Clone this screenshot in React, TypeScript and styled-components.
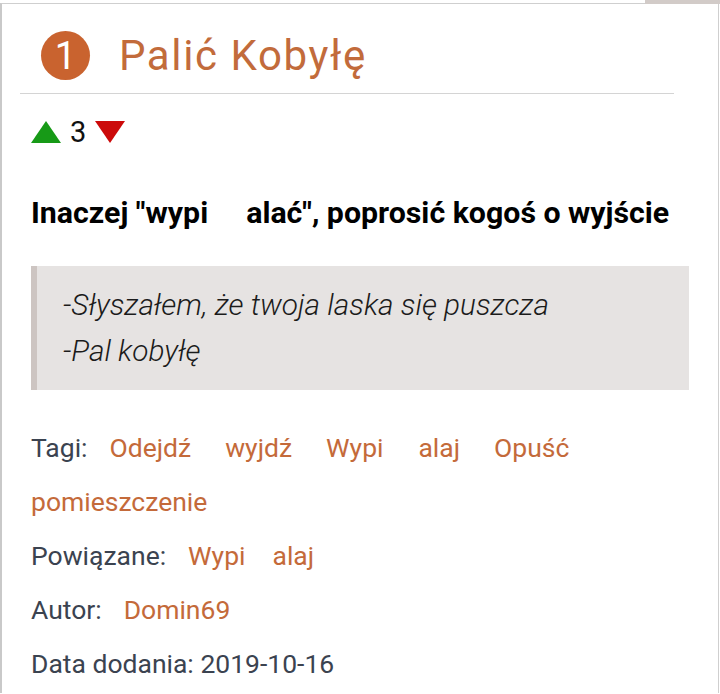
import styled, { createGlobalStyle } from 'styled-components';

type Entry = {
  number: number;
  title: string;
  votes: number;
  meaning: string[];
  example: string[];
  tags: string[][];
  related: string[];
  author: string;
  added: string;
};

const entry: Entry = {
  number: 1,
  title: 'Palić Kobyłę',
  votes: 3,
  meaning: ['Inaczej "wypi', 'alać", poprosić kogoś o wyjście'],
  example: ['-Słyszałem, że twoja laska się puszcza', '-Pal kobyłę'],
  tags: [['Odejdź'], ['wyjdź'], ['Wypi', 'alaj'], ['Opuść'], ['pomieszczenie']],
  related: ['Wypi', 'alaj'],
  author: 'Domin69',
  added: '2019-10-16',
};

const GlobalStyle = createGlobalStyle`
  html, body {
    margin: 0;
    padding: 0;
    background: #fff;
  }
  body {
    font-family: Roboto, "Noto Sans", sans-serif;
    color: #3b4350;
  }
`;

// tekst zakryty w oryginale - zostawiamy przerwę
function Hidden({ parts, width }: { parts: string[]; width: number }) {
  return (
    <>
      {parts[0]}
      {parts.length > 1 && <Gap $w={width} />}
      {parts[1]}
    </>
  );
}

export default function App() {
  return (
    <>
      <GlobalStyle />
      <TopStrip>
        <Tab />
      </TopStrip>
      <Card>
        <Header>
          <Num>{entry.number}</Num>
          <Title>{entry.title}</Title>
        </Header>
        <Body>
          <Votes>
            <Arrow $up />
            <Count>{entry.votes}</Count>
            <Arrow />
          </Votes>
          <Meaning>
            <Hidden parts={entry.meaning} width={38} />
          </Meaning>
          <Quote>
            {entry.example.map((l) => (
              <p key={l}>{l}</p>
            ))}
          </Quote>
          <Meta>
            <MetaRow>
              <Label>Tagi:</Label>
              {entry.tags.map((t, i) => (
                <Tag key={i}>
                  <Hidden parts={t} width={35} />
                </Tag>
              ))}
            </MetaRow>
            <MetaRow>
              <Label>Powiązane:</Label>
              <Tag>
                <Hidden parts={entry.related} width={27} />
              </Tag>
            </MetaRow>
            <MetaRow>
              <Label>Autor:</Label>
              <Tag>{entry.author}</Tag>
            </MetaRow>
            <MetaRow>
              <Label>Data dodania: {entry.added}</Label>
            </MetaRow>
          </Meta>
        </Body>
      </Card>
    </>
  );
}

const TopStrip = styled.div`
  display: flex;
  justify-content: flex-end;
  height: 3px;
`;

const Tab = styled.div`
  width: 75px;
  height: 4px;
  background: #d2cbc8;
`;

const Card = styled.div`
  border: 1px solid #cfcfcf;
  border-left: 2px solid #c9c9c9;
  border-bottom: none;
  margin-right: 1px;
  min-height: 690px;
  box-sizing: border-box;
`;

const Header = styled.div`
  display: flex;
  align-items: center;
  gap: 29px;
  margin: 0 44px 0 18px;
  padding: 27px 0 13px 21px;
  border-bottom: 1px solid #d4d4d4;
`;

const Num = styled.div`
  width: 49px;
  height: 49px;
  border-radius: 50%;
  background: #c9632f;
  color: #fff;
  font-size: 38px;
  display: flex;
  align-items: center;
  justify-content: center;
  flex-shrink: 0;
`;

const Title = styled.h1`
  margin: 0;
  font-size: 42px;
  font-weight: 400;
  color: #c26b3b;
  letter-spacing: 1.6px;
`;

const Body = styled.div`
  padding: 0 29px 0 29px;
`;

const Votes = styled.div`
  display: flex;
  align-items: center;
  gap: 9px;
  margin-top: 22px;
  height: 32px;
`;

const Arrow = styled.span<{ $up?: boolean }>`
  width: 0;
  height: 0;
  border-left: 15px solid transparent;
  border-right: 15px solid transparent;
  ${(p) =>
    p.$up
      ? 'border-bottom: 22px solid #179a17;'
      : 'border-top: 22px solid #cc0a0a;'}
`;

const Count = styled.span`
  font-size: 29px;
  color: #111;
`;

const Meaning = styled.p`
  margin: 47px 0 0;
  font-size: 30.3px;
  font-weight: 700;
  color: #000;
`;

const Gap = styled.span<{ $w: number }>`
  display: inline-block;
  width: ${(p) => p.$w}px;
`;

const Quote = styled.blockquote`
  margin: 36px 0 0;
  padding: 16px 24px 16px 26px;
  background: #e6e3e2;
  border-left: 6px solid #cdc5c2;

  p {
    margin: 0;
    font-size: 29.8px;
    font-style: italic;
    font-weight: 300;
    color: #1b1b1b;
    line-height: 46px;
  }
`;

const Meta = styled.div`
  margin-top: 31px;
  font-size: 26.5px;
  line-height: 54px;
`;

const MetaRow = styled.div`
  display: flex;
  flex-wrap: wrap;
  column-gap: 34px;
`;

const Label = styled.span`
  color: #3b4350;
  margin-right: -12px;
`;

const Tag = styled.a`
  color: #c46a3a;
  text-decoration: none;
`;
